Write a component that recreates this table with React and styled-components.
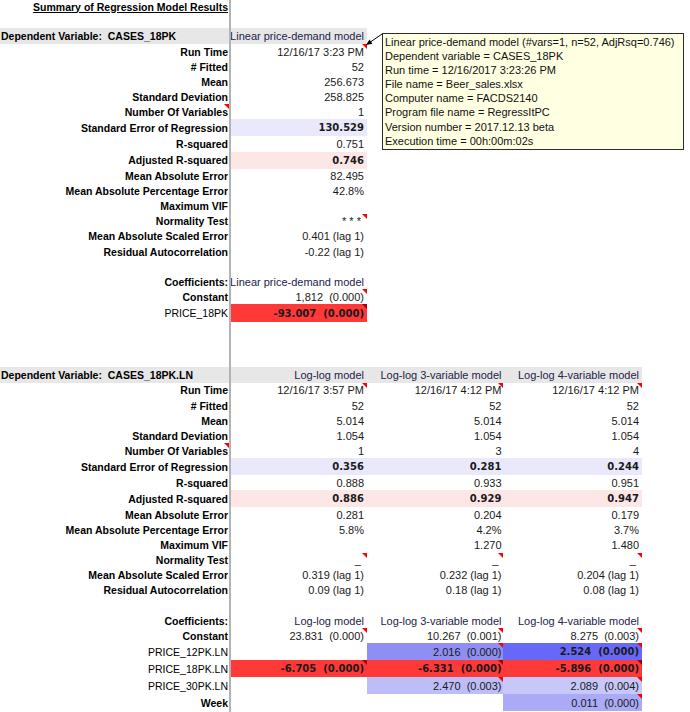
import styled, { createGlobalStyle } from "styled-components";

const GlobalStyle = createGlobalStyle`
  body {
    margin: 0;
    background: #fff;
    font-family: "Liberation Sans", Arial, sans-serif;
  }
`;

const C = {
  head: "#e7e7e7",
  ser: "#e9e9fb",
  adj: "#fde6e6",
  red: "#ff3838",
  blue1: "#8e8ef3",
  blue2: "#6868f8",
  blue3: "#bdbdf8",
  blue4: "#c7c7f9",
  blue5: "#aaaaf6",
};

const PADS = [3, 1.5, 3];

const Sheet = styled.div`
  position: relative;
  width: 690px;
  min-height: 712px;
  overflow: hidden;
  color: #111;
`;

const Row = styled.div`
  display: grid;
  grid-template-columns: 231px 136px 136px 139px;
  height: ${(p) => p.$h}px;
`;

const Label = styled.div`
  position: relative;
  display: flex;
  align-items: center;
  justify-content: ${(p) => (p.$left ? "flex-start" : "flex-end")};
  padding: 0 1px;
  border-right: 2px solid #b3b3b3;
  background: ${(p) => p.$bg || "transparent"};
  font-size: 10.5px;
  font-weight: ${(p) => (p.$plain ? 400 : 700)};
  color: #000;
  white-space: pre;
`;

const Title = styled.span`
  text-decoration: underline;
`;

const Cell = styled.div`
  position: relative;
  display: flex;
  align-items: center;
  justify-content: flex-end;
  padding-right: ${(p) => p.$pad}px;
  background: ${(p) => p.$bg || "transparent"};
  font-family: ${(p) =>
    p.$bold
      ? '"DejaVu Sans", Verdana, sans-serif'
      : '"Liberation Sans", Arial, sans-serif'};
  font-size: ${(p) => (p.$bold ? 10 : 11)}px;
  font-weight: ${(p) => (p.$bold ? 700 : 400)};
  color: ${(p) => (p.$model ? "#23234a" : "#1a1a1a")};
  white-space: pre;
  overflow: hidden;
`;

const Mark = styled.span`
  position: absolute;
  top: 0;
  right: 0;
  width: 0;
  height: 0;
  border-left: 5px solid transparent;
  border-top: 5px solid ${(p) => (p.$dark ? "#a00000" : "#ff0000")};
`;

const Note = styled.div`
  position: absolute;
  left: 382px;
  top: 33px;
  width: 296px;
  height: 113px;
  padding: 1px 2px;
  border: 1px solid #2b2b2b;
  background: #ffffe1;
  font-size: 11px;
  line-height: 14.1px;
  color: #111;
`;

const NoteLine = styled.div`
  white-space: nowrap;
`;

const Arrow = styled.svg`
  position: absolute;
  left: 362px;
  top: 30px;
`;

const H = 15.1;

const table1 = [
  { label: "Run Time", cells: [{ v: "12/16/17 3:23 PM", mark: true }] },
  { label: "# Fitted", cells: [{ v: "52" }] },
  { label: "Mean", cells: [{ v: "256.673" }] },
  { label: "Standard Deviation", cells: [{ v: "258.825" }] },
  { label: "Number Of Variables", labelMark: true, cells: [{ v: "1" }] },
  { label: "Standard Error of Regression", h: 17, bg: C.ser, cells: [{ v: "130.529", bold: true }] },
  { label: "R-squared", cells: [{ v: "0.751" }] },
  { label: "Adjusted R-squared", h: 17, bg: C.adj, cells: [{ v: "0.746", bold: true }] },
  { label: "Mean Absolute Error", cells: [{ v: "82.495" }] },
  { label: "Mean Absolute Percentage Error", cells: [{ v: "42.8%" }] },
  { label: "Maximum VIF", cells: [{ v: "" }] },
  { label: "Normality Test", cells: [{ v: "* * * ", mark: true }] },
  { label: "Mean Absolute Scaled Error", cells: [{ v: "0.401 (lag 1)" }] },
  { label: "Residual Autocorrelation", cells: [{ v: "-0.22 (lag 1)" }] },
  { label: "", cells: [] },
  { label: "Coefficients:", cells: [{ v: "Linear price-demand model", model: true }] },
  { label: "Constant", cells: [{ v: "1,812  (0.000)", mark: true }] },
  { label: "PRICE_18PK", plain: true, h: 18, cells: [{ v: "-93.007  (0.000)", bold: true, bg: C.red, mark: true, dark: true }] },
];

const models = ["Log-log model", "Log-log 3-variable model", "Log-log 4-variable model"];
const same = (v) => [{ v }, { v }, { v }];
const marked = (v) => [{ v, mark: true }, { v, mark: true }, { v, mark: true }];

const table2 = [
  {
    label: "Run Time",
    cells: [
      { v: "12/16/17 3:57 PM", mark: true },
      { v: "12/16/17 4:12 PM", mark: true },
      { v: "12/16/17 4:12 PM", mark: true },
    ],
  },
  { label: "# Fitted", cells: same("52") },
  { label: "Mean", cells: same("5.014") },
  { label: "Standard Deviation", cells: same("1.054") },
  { label: "Number Of Variables", labelMark: true, cells: [{ v: "1" }, { v: "3" }, { v: "4" }] },
  {
    label: "Standard Error of Regression",
    h: 17,
    bg: C.ser,
    cells: [{ v: "0.356", bold: true }, { v: "0.281", bold: true }, { v: "0.244", bold: true }],
  },
  { label: "R-squared", cells: [{ v: "0.888" }, { v: "0.933" }, { v: "0.951" }] },
  {
    label: "Adjusted R-squared",
    h: 17,
    bg: C.adj,
    cells: [{ v: "0.886", bold: true }, { v: "0.929", bold: true }, { v: "0.947", bold: true }],
  },
  { label: "Mean Absolute Error", cells: [{ v: "0.281" }, { v: "0.204" }, { v: "0.179" }] },
  { label: "Mean Absolute Percentage Error", cells: [{ v: "5.8%" }, { v: "4.2%" }, { v: "3.7%" }] },
  { label: "Maximum VIF", cells: [{ v: "" }, { v: "1.270" }, { v: "1.480" }] },
  { label: "Normality Test", cells: marked("_ ") },
  {
    label: "Mean Absolute Scaled Error",
    cells: [{ v: "0.319 (lag 1)" }, { v: "0.232 (lag 1)" }, { v: "0.204 (lag 1)" }],
  },
  {
    label: "Residual Autocorrelation",
    cells: [{ v: "0.09 (lag 1)" }, { v: "0.18 (lag 1)" }, { v: "0.08 (lag 1)" }],
  },
  { label: "", cells: [] },
  { label: "Coefficients:", cells: models.map((v) => ({ v, model: true })) },
  {
    label: "Constant",
    cells: [
      { v: "23.831  (0.000)", mark: true },
      { v: "10.267  (0.001)", mark: true },
      { v: "8.275  (0.003)", mark: true },
    ],
  },
  {
    label: "PRICE_12PK.LN",
    plain: true,
    h: 17,
    cells: [
      { v: "" },
      { v: "2.016  (0.000)", bg: C.blue1, mark: true },
      { v: "2.524  (0.000)", bg: C.blue2, mark: true, bold: true },
    ],
  },
  {
    label: "PRICE_18PK.LN",
    plain: true,
    h: 17,
    cells: [
      { v: "-6.705  (0.000)", bg: C.red, mark: true, dark: true, bold: true },
      { v: "-6.331  (0.000)", bg: C.red, mark: true, dark: true, bold: true },
      { v: "-5.896  (0.000)", bg: C.red, mark: true, dark: true, bold: true },
    ],
  },
  {
    label: "PRICE_30PK.LN",
    plain: true,
    h: 17,
    cells: [
      { v: "" },
      { v: "2.470  (0.003)", bg: C.blue3, mark: true },
      { v: "2.089  (0.004)", bg: C.blue4, mark: true },
    ],
  },
  {
    label: "Week",
    h: 17,
    cells: [{ v: "" }, { v: "" }, { v: "0.011  (0.000)", bg: C.blue5, mark: true }],
  },
];

const SheetRow = ({ row, cols }) => (
  <Row $h={row.h || H}>
    <Label $plain={row.plain}>
      {row.label}
      {row.labelMark && <Mark />}
    </Label>
    {[0, 1, 2].map((i) => {
      const c = row.cells[i];
      if (!c || i >= cols) return <Cell key={i} $pad={PADS[i]} />;
      return (
        <Cell
          key={i}
          $pad={PADS[i]}
          $bg={c.bg || row.bg}
          $bold={c.bold}
          $model={c.model}
        >
          {c.v}
          {c.mark && <Mark $dark={c.dark} />}
        </Cell>
      );
    })}
  </Row>
);

const HeadRow = ({ dep, names, h }) => (
  <Row $h={h}>
    <Label $left $bg={C.head}>{`Dependent Variable:  ${dep}`}</Label>
    {[0, 1, 2].map((i) => (
      <Cell key={i} $pad={PADS[i]} $bg={names[i] ? C.head : null} $model>
        {names[i] || ""}
      </Cell>
    ))}
  </Row>
);

const Spacer = ({ h }) => (
  <Row $h={h}>
    <Label />
  </Row>
);

const noteLines = [
  "Linear price-demand model (#vars=1, n=52, AdjRsq=0.746)",
  "Dependent variable = CASES_18PK",
  "Run time = 12/16/2017 3:23:26 PM",
  "File name = Beer_sales.xlsx",
  "Computer name = FACDS2140",
  "Program file name = RegressItPC",
  "Version number = 2017.12.13 beta",
  "Execution time = 00h:00m:02s",
];

export default function App() {
  return (
    <>
      <GlobalStyle />
      <Sheet>
        <Row $h={13}>
          <Label>
            <Title>Summary of Regression Model Results</Title>
          </Label>
        </Row>
        <Spacer h={15} />
        <HeadRow dep="CASES_18PK" names={["Linear price-demand model"]} h={16} />
        {table1.map((row, i) => (
          <SheetRow key={i} row={row} cols={1} />
        ))}
        <Spacer h={44.5} />
        <HeadRow dep="CASES_18PK.LN" names={models} h={16} />
        {table2.map((row, i) => (
          <SheetRow key={i} row={row} cols={3} />
        ))}
        <Spacer h={20} />

        <Arrow width="24" height="20" viewBox="0 0 24 20">
          <line x1="20" y1="4" x2="7" y2="13" stroke="#000" strokeWidth="1" />
          <polygon points="4,15 10.4,13.7 7.5,9.5" fill="#000" />
        </Arrow>
        <Note>
          {noteLines.map((l) => (
            <NoteLine key={l}>{l}</NoteLine>
          ))}
        </Note>
      </Sheet>
    </>
  );
}
